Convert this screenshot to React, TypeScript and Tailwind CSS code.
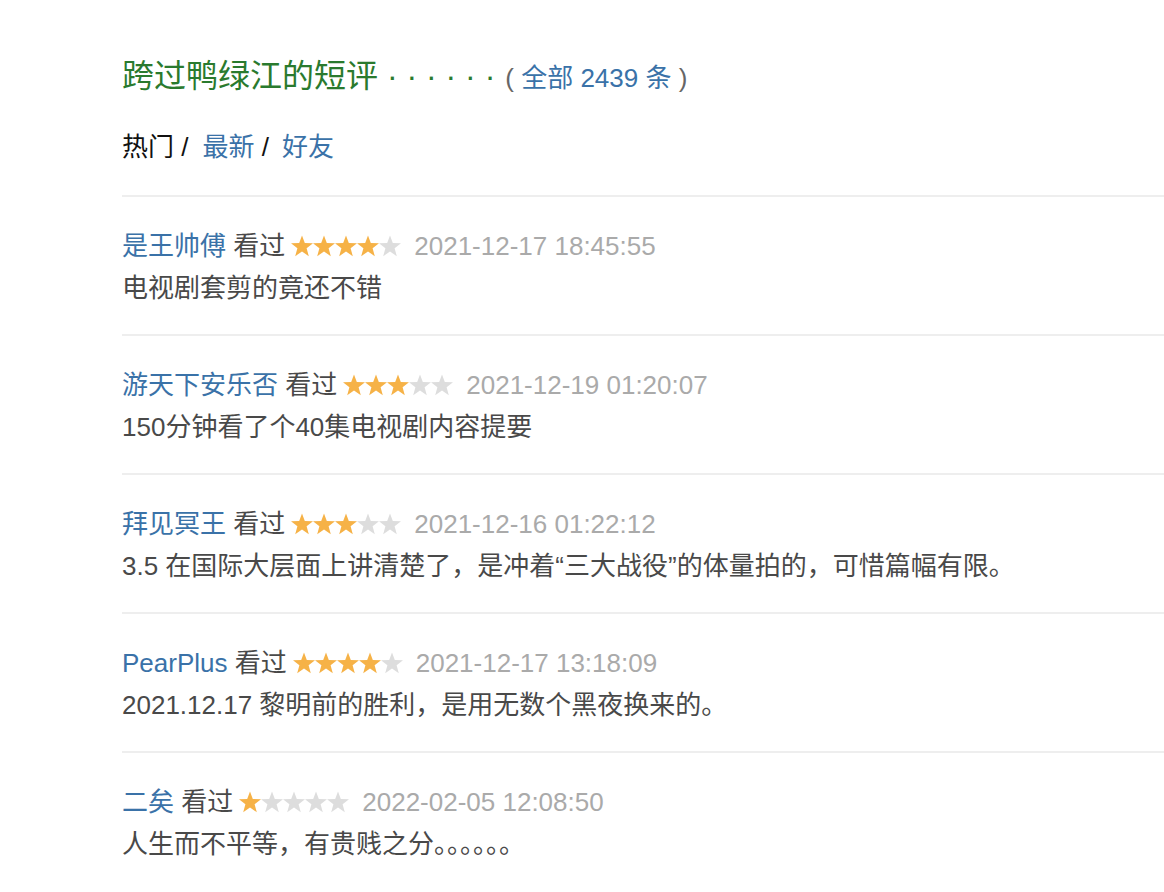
import { FC } from 'react'

interface Comment {
  user: string
  rating: number
  time: string
  text: string
}

const comments: Comment[] = [
  { user: '是王帅傅', rating: 4, time: '2021-12-17 18:45:55', text: '电视剧套剪的竟还不错' },
  { user: '游天下安乐否', rating: 3, time: '2021-12-19 01:20:07', text: '150分钟看了个40集电视剧内容提要' },
  {
    user: '拜见冥王',
    rating: 3,
    time: '2021-12-16 01:22:12',
    text: '3.5 在国际大层面上讲清楚了，是冲着“三大战役”的体量拍的，可惜篇幅有限。',
  },
  { user: 'PearPlus', rating: 4, time: '2021-12-17 13:18:09', text: '2021.12.17 黎明前的胜利，是用无数个黑夜换来的。' },
  { user: '二矣', rating: 1, time: '2022-02-05 12:08:50', text: '人生而不平等，有贵贱之分。。。。。。' },
]

const Star: FC<{ on: boolean }> = ({ on }) => (
  <svg width="22" height="22" viewBox="0 0 22 22" className="block">
    <polygon
      points="11,0.4 13.8,7.9 22,8.2 15.6,13.3 17.8,21.2 11,16.6 4.2,21.2 6.4,13.3 0,8.2 8.2,7.9"
      fill={on ? '#f6b247' : '#dddddd'}
    />
  </svg>
)

const Stars: FC<{ n: number }> = ({ n }) => (
  <span className="inline-flex ml-[6px] mr-[13px]">
    {[0, 1, 2, 3, 4].map((i) => (
      <Star key={i} on={i < n} />
    ))}
  </span>
)

const CommentItem: FC<{ c: Comment }> = ({ c }) => (
  <div className="border-t-2 border-[#eeeeee] pt-[28px] pb-[25px]">
    <div className="flex items-center h-[42px] whitespace-nowrap">
      <a className="text-[#3a72a8]">{c.user}</a>
      <span className="text-[#494949]">&nbsp;看过</span>
      <Stars n={c.rating} />
      <span className="text-[#aaaaaa]">{c.time}</span>
    </div>
    <p className="leading-[42px] text-[#494949]">{c.text}</p>
  </div>
)

export default function App() {
  return (
    <div
      className="bg-white min-h-screen pl-[122px] pt-[54px] text-[26px]"
      style={{ fontFamily: '"Liberation Sans", "Noto Sans CJK SC", sans-serif' }}
    >
      <h2 className="text-[32px] leading-[44px] text-[#2a7a2e] whitespace-nowrap">
        跨过鸭绿江的短评 · · · · · ·
        <span className="text-[26px] text-[#666666] ml-[10px]">
          ( <a className="text-[#3a72a8]">全部 2439 条</a> )
        </span>
      </h2>
      <div className="mt-[26px] leading-[42px] whitespace-nowrap">
        <span className="text-[#111111]">热门 /</span>
        <a className="text-[#3a72a8] ml-[14px]">最新</a>
        <span className="text-[#111111]"> /</span>
        <a className="text-[#3a72a8] ml-[13px]">好友</a>
      </div>
      <div className="mt-[27px]">
        {comments.map((c) => (
          <CommentItem key={c.user} c={c} />
        ))}
      </div>
    </div>
  )
}
